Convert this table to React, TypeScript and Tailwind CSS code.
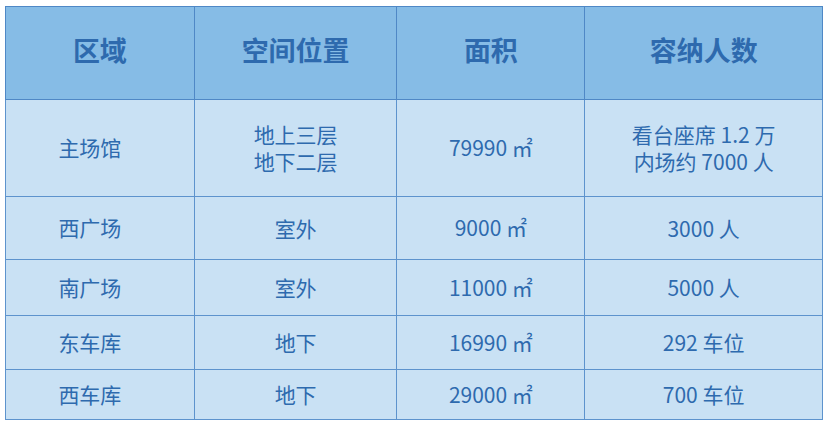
const rows = [
  { area: "主场馆", place: ["地上三层", "地下二层"], size: "79990 ㎡", cap: ["看台座席 1.2 万", "内场约 7000 人"], h: "h-[97px]" },
  { area: "西广场", place: ["室外"], size: "9000 ㎡", cap: ["3000 人"], h: "h-[63px]" },
  { area: "南广场", place: ["室外"], size: "11000 ㎡", cap: ["5000 人"], h: "h-[56px]" },
  { area: "东车库", place: ["地下"], size: "16990 ㎡", cap: ["292 车位"], h: "h-[54px]" },
  { area: "西车库", place: ["地下"], size: "29000 ㎡", cap: ["700 车位"], h: "h-[50px]" },
];

const headers = ["区域", "空间位置", "面积", "容纳人数"];

export default function App() {
  return (
    <div className="w-[832px] h-[426px] bg-white pt-[6px] pl-[5px] font-['Noto_Sans_CJK_SC','Noto_Sans',sans-serif]">
      <table className="w-[818px] border-collapse border border-[#4f88c6] text-[#2e6aae]">
        <colgroup>
          <col className="w-[189px]" />
          <col className="w-[203px]" />
          <col className="w-[188px]" />
          <col className="w-[238px]" />
        </colgroup>
        <thead>
          <tr className="h-[93px] bg-[#86bce6]">
            {headers.map((t) => (
              <th key={t} className="border border-[#4f88c6] text-[27px] font-bold text-center align-middle pb-[5px]">
                {t}
              </th>
            ))}
          </tr>
        </thead>
        <tbody>
          {rows.map((r) => (
            <tr key={r.area} className={`${r.h} bg-[#c9e1f4]`}>
              <td className="border border-[#5d93cd] text-center align-middle text-[21px] pr-[20px]">{r.area}</td>
              <td className="border border-[#5d93cd] text-center align-middle text-[21px] leading-[27px]">
                {r.place.map((p) => (
                  <div key={p}>{p}</div>
                ))}
              </td>
              <td className="border border-[#5d93cd] text-center align-middle text-[21px]">{r.size}</td>
              <td className="border border-[#5d93cd] text-center align-middle text-[21px] leading-[27px]">
                {r.cap.map((c) => (
                  <div key={c}>{c}</div>
                ))}
              </td>
            </tr>
          ))}
        </tbody>
      </table>
    </div>
  );
}
